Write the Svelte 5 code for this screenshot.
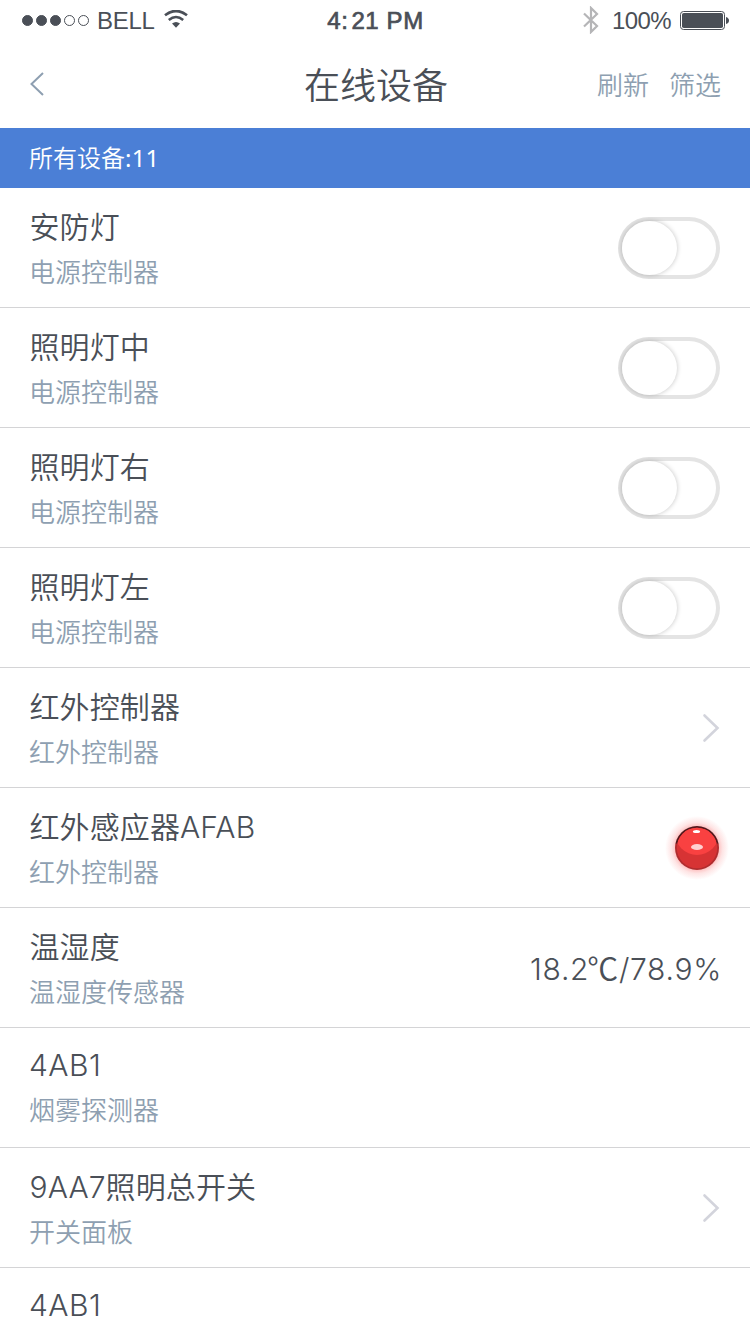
<script>
  let devices = $state([
    { name: '安防灯', type: '电源控制器', kind: 'switch', on: false },
    { name: '照明灯中', type: '电源控制器', kind: 'switch', on: false },
    { name: '照明灯右', type: '电源控制器', kind: 'switch', on: false },
    { name: '照明灯左', type: '电源控制器', kind: 'switch', on: false },
    { name: '红外控制器', type: '红外控制器', kind: 'link' },
    { name: '红外感应器AFAB', type: '红外控制器', kind: 'alarm' },
    { name: '温湿度', type: '温湿度传感器', kind: 'value', temperature: '18.2', humidity: '78.9%' },
    { name: '4AB1', type: '烟雾探测器', kind: 'none', latin: true },
    { name: '9AA7照明总开关', type: '开关面板', kind: 'link' },
    { name: '4AB1', type: '', kind: 'none', latin: true }
  ])

  const total = 11
  const signal = [true, true, true, false, false]

  function toggle(device) {
    device.on = !device.on
  }
</script>

<div class="screen">
  <div class="status">
    <div class="status__side">
      <div class="status__signal">
        {#each signal as filled}
          <span class="status__dot" class:status__dot--filled={filled}></span>
        {/each}
      </div>
      <span class="status__carrier">BELL</span>
      <svg class="status__wifi" width="24" height="18" viewBox="0 0 24 18">
        <path d="M1 5.3 Q12 -3.3 23 5.3" fill="none" stroke="#4a4f57" stroke-width="2.7" />
        <path d="M4.8 10 Q12 4 19.2 10" fill="none" stroke="#4a4f57" stroke-width="2.5" />
        <path d="M8 13.6 Q12 10.6 16 13.6 L12 17.8 Z" fill="#4a4f57" />
      </svg>
    </div>
    <span class="status__time">4<span class="status__colon">:</span>21 PM</span>
    <div class="status__side status__side--right">
      <svg class="status__bluetooth" width="16" height="28" viewBox="0 0 16 28">
        <path d="M1 7.5 L14 20 L8 26 V2 L14 8 L1 20.5" fill="none" stroke="#b5b5b7" stroke-width="2.2" />
      </svg>
      <span class="status__percent">100%</span>
      <svg class="status__battery" width="49" height="19" viewBox="0 0 49 19">
        <rect x="0.5" y="0.5" width="44" height="18" rx="3" fill="none" stroke="#4a4f57" />
        <rect x="2" y="2" width="41" height="15" rx="1.8" fill="#4a4f57" />
        <path d="M46 6 Q49 7 49 9.5 Q49 12 46 13 Z" fill="#4a4f57" />
      </svg>
    </div>
  </div>

  <header class="nav">
    <button class="nav__back" aria-label="返回">
      <svg width="15" height="24" viewBox="0 0 15 24">
        <path d="M14 1 L2.5 12 L14 23" fill="none" stroke="#8e9fb1" stroke-width="2" />
      </svg>
    </button>
    <h1 class="nav__title">在线设备</h1>
    <div class="nav__actions">
      <button class="nav__action">刷新</button>
      <button class="nav__action">筛选</button>
    </div>
  </header>

  <div class="summary">所有设备<span class="summary__count">:{total}</span></div>

  <ul class="list">
    {#each devices as device}
      <li class="row">
        <div class="row__text" class:row__text--latin={device.latin}>
          <span class="row__name">{device.name}</span>
          <span class="row__type">{device.type}</span>
        </div>
        {#if device.kind === 'switch'}
          <button
            class="switch"
            class:switch--on={device.on}
            role="switch"
            aria-checked={device.on}
            aria-label={device.name}
            onclick={() => toggle(device)}
          >
            <span class="switch__knob"></span>
          </button>
        {:else if device.kind === 'link'}
          <svg class="row__arrow" width="18" height="30" viewBox="0 0 18 30">
            <path d="M2.5 2.5 L15.5 15 L2.5 27.5" fill="none" stroke="#d3d4dc" stroke-width="2.6" stroke-linecap="round" />
          </svg>
        {:else if device.kind === 'alarm'}
          <svg class="row__alarm" width="68" height="68" viewBox="0 0 68 68">
            <defs>
              <radialGradient id="glow">
                <stop offset="0.62" stop-color="#f94444" stop-opacity="0.4" />
                <stop offset="0.8" stop-color="#f94444" stop-opacity="0.14" />
                <stop offset="1" stop-color="#f94444" stop-opacity="0" />
              </radialGradient>
              <linearGradient id="rim" x1="0" y1="0" x2="0" y2="1">
                <stop offset="0.38" stop-color="#54191d" />
                <stop offset="0.42" stop-color="#b02d2f" />
              </linearGradient>
              <clipPath id="ball">
                <circle cx="34" cy="34" r="20.2" />
              </clipPath>
            </defs>
            <circle cx="34" cy="34" r="32" fill="url(#glow)" />
            <circle cx="34" cy="34" r="22" fill="url(#rim)" />
            <circle cx="34" cy="34" r="20.2" fill="#d73334" />
            <circle cx="34" cy="19" r="22" fill="#f94141" clip-path="url(#ball)" />
            <ellipse cx="33.5" cy="17.5" rx="3.6" ry="1.6" fill="#fff" />
            <ellipse cx="34" cy="33" rx="6" ry="3" fill="#ffd0d0" />
          </svg>
        {:else if device.kind === 'value'}
          <span class="row__value">{device.temperature}<span class="row__unit">℃</span>/{device.humidity}</span>
        {/if}
      </li>
    {/each}
  </ul>
</div>

<style>
  :global(body) {
    overflow: hidden;
    background: #fff;
  }

  .screen {
    width: 750px;
    height: 1334px;
    overflow: hidden;
    background: #fff;
    color: #4a4f57;
    font-family: Inter, 'Noto Sans CJK SC', sans-serif;
    font-weight: 350;
  }

  button {
    padding: 0;
    border: none;
    background: none;
    font: inherit;
    color: inherit;
    cursor: pointer;
  }

  .status {
    display: grid;
    grid-template-columns: 1fr auto 1fr;
    align-items: center;
    height: 40px;
    padding: 0 21px 0 22px;
    font-family: 'Liberation Sans', Arial, sans-serif;
    font-size: 24px;
    font-weight: 400;
    line-height: 38px;
  }

  .status__side {
    display: flex;
    align-items: center;
  }

  .status__side--right {
    justify-content: flex-end;
  }

  .status__signal {
    display: flex;
    gap: 3px;
    margin-right: 8px;
  }

  .status__dot {
    box-sizing: border-box;
    width: 11px;
    height: 11px;
    border: 1px solid #4a4f57;
    border-radius: 50%;
  }

  .status__dot--filled {
    background: #4a4f57;
  }

  .status__carrier {
    margin-right: 9px;
    padding-top: 2px;
    letter-spacing: -0.25px;
  }

  .status__wifi {
    margin-bottom: 2px;
  }

  .status__time {
    padding-top: 2px;
    letter-spacing: 0.6px;
    -webkit-text-stroke: 0.7px #4a4f57;
  }

  .status__colon {
    margin-right: 3px;
  }

  .status__bluetooth {
    margin-right: 13px;
  }

  .status__percent {
    margin-right: 9px;
    padding-top: 2px;
    letter-spacing: -0.6px;
  }

  .nav {
    display: grid;
    grid-template-columns: 1fr auto 1fr;
    align-items: center;
    height: 88px;
    padding: 0 29px;
  }

  .nav__back {
    display: flex;
    justify-self: start;
  }

  .nav__title {
    margin: 0;
    padding: 5px 0 0 2px;
    font-size: 36px;
    font-weight: inherit;
    line-height: 83px;
  }

  .nav__actions {
    display: flex;
    justify-content: flex-end;
    gap: 20px;
    padding-bottom: 2px;
    color: #8e9fb1;
    font-size: 26px;
  }

  .summary {
    box-sizing: border-box;
    height: 60px;
    padding: 0 29px;
    background: #4b7fd6;
    color: #fff;
    font-family: 'Noto Sans', 'Noto Sans CJK SC', sans-serif;
    font-size: 24px;
    line-height: 60px;
  }

  .summary__count {
    font-weight: 400;
    letter-spacing: 0.2px;
  }

  .list {
    margin: 0;
    padding: 0;
    list-style: none;
  }

  .row {
    box-sizing: border-box;
    display: flex;
    align-items: center;
    justify-content: space-between;
    height: 120px;
    padding: 0 30px 0 29px;
    border-bottom: 1px solid #d4d4d6;
  }

  .row__text {
    display: flex;
    flex-direction: column;
    align-self: flex-start;
    gap: 7px;
    padding-top: 18px;
  }

  .row__text--latin {
    padding-top: 16px;
  }

  .row__name {
    padding-left: 0.5px;
    font-size: 30px;
    line-height: 42px;
    letter-spacing: 0.1px;
  }

  .row__text--latin .row__name {
    padding-left: 0;
    letter-spacing: 0.5px;
  }

  .row__type {
    color: #8e9fb1;
    font-size: 26px;
    line-height: 36px;
  }

  .row__arrow {
    margin-top: 1px;
  }

  .row__alarm {
    margin-right: -11px;
  }

  .row__value {
    margin-right: -2px;
    padding-top: 3px;
    font-size: 30px;
    line-height: 42px;
    letter-spacing: 0.7px;
  }

  .row__unit {
    margin-left: -2px;
    font-family: 'Noto Sans CJK SC', sans-serif;
    font-size: 31px;
    line-height: 1;
  }

  .switch {
    box-sizing: border-box;
    display: flex;
    width: 102px;
    height: 62px;
    padding: 4px;
    border-radius: 31px;
    background: #fff;
    box-shadow: inset 0 0 0 4px #e4e4e4;
    overflow: hidden;
  }

  .switch__knob {
    width: 55px;
    height: 54px;
    border-radius: 50%;
    background: #fff;
    box-shadow: 0 0 5px rgba(0, 0, 0, 0.24);
    transition: transform 200ms;
  }

  .switch--on {
    background: #4b7fd6;
    box-shadow: inset 0 0 0 4px #4b7fd6;
  }

  .switch--on .switch__knob {
    transform: translateX(39px);
  }
</style>
